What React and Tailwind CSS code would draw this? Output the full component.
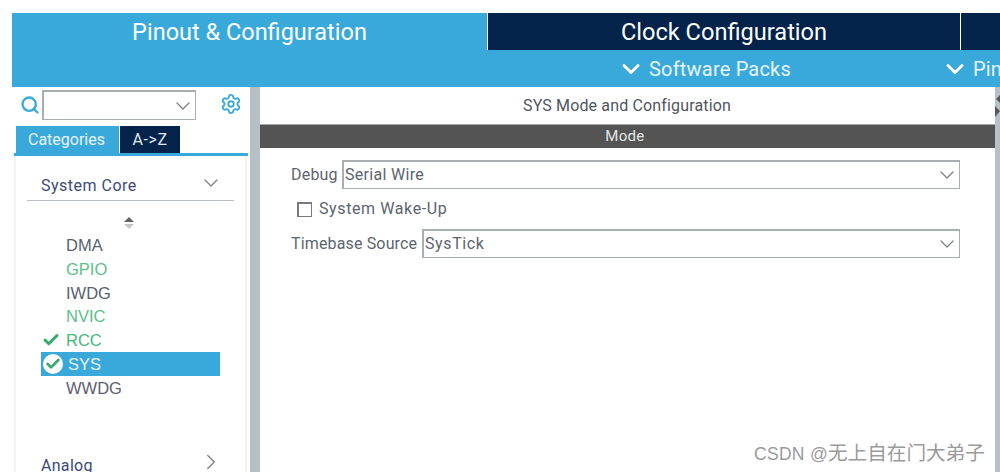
import React from "react";
import { ChevronDown, ChevronRight, Search, Settings, Check } from "lucide-react";

const items = [
  { name: "DMA", color: "text-[#5a5f6e]" },
  { name: "GPIO", color: "text-[#5cc08a]" },
  { name: "IWDG", color: "text-[#5a5f6e]" },
  { name: "NVIC", color: "text-[#5cc08a]" },
  { name: "RCC", color: "text-[#45b878]", check: true },
  { name: "SYS", selected: true },
  { name: "WWDG", color: "text-[#5a5f6e]" },
];

const Select = ({ value, tracking, className }) => (
  <div className={`h-[29px] flex items-center justify-between border-2 border-[#a9aeb3] border-r border-b bg-white pl-[1px] ${className}`}>
    <span className={`text-[16px] text-[#5c6470] ${tracking}`}>{value}</span>
    <ChevronDown size={24} strokeWidth={1.3} className="text-[#7d8085]" />
  </div>
);

const App = () => {
  return (
    <div className="relative w-[1000px] h-[472px] overflow-hidden bg-white font-['Roboto',sans-serif]">
      <div className="h-[13px] bg-white" />

      {/* top tabs */}
      <div className="ml-[12px]">
        <div className="flex h-[37px]">
          <div className="w-[475px] bg-[#39a9dc] text-white text-[23.5px] leading-[38px] text-center">
            Pinout &amp; Configuration
          </div>
          <div className="w-[472px] ml-[1px] bg-[#03234b] text-white text-[23.6px] leading-[38px] text-center">
            Clock Configuration
          </div>
          <div className="flex-1 ml-[1px] bg-[#03234b]" />
        </div>
        <div className="h-[37px] bg-[#39a9dc] flex items-center text-[#e8f5fb] text-[20px] tracking-[0.2px] whitespace-nowrap">
          <div className="ml-[605px] flex items-center gap-[4px]">
            <ChevronDown size={28} strokeWidth={2.5} className="text-white" />
            <span>Software Packs</span>
          </div>
          <div className="ml-[150px] flex items-center gap-[4px]">
            <ChevronDown size={28} strokeWidth={2.5} className="text-white" />
            <span>Pinout</span>
          </div>
        </div>
      </div>

      <div className="flex h-[385px]">
        {/* left panel */}
        <div className="w-[250px] shrink-0 bg-white">
          <div className="h-[39px] flex items-start pl-[20px] pt-[3px]">
            <Search size={20} strokeWidth={2.8} className="text-[#39a9dc] mt-[5px]" />
            <div className="ml-[2px] w-[154px] h-[30px] border-2 border-[#a9aeb3] border-r border-b flex items-center justify-end">
              <ChevronDown size={24} strokeWidth={1.3} className="text-[#7d8085]" />
            </div>
            <Settings size={22} strokeWidth={2} className="ml-[24px] mt-[3px] text-[#39a9dc]" />
          </div>
          <div className="flex h-[27px] ml-[16px]">
            <div className="w-[103px] bg-[#39a9dc] text-[#e8f5fb] text-[16px] leading-[27px] text-center pr-[2px]">
              Categories
            </div>
            <div className="w-[60px] ml-[1px] bg-[#03234b] text-[#dfe6ee] text-[16px] leading-[27px] text-center tracking-[0.6px]">
              A-&gt;Z
            </div>
          </div>
          <div className="h-[3px] ml-[14px] mr-[2px] bg-[#39a9dc]" />
          <div className="ml-[14px] mr-[3px] h-[316px] border-l-2 border-r-2 border-[#f0f1f2] overflow-hidden">
            <div className="mx-[11px] mt-[14px] h-[31px] flex items-start justify-between border-b border-[#b9bec6] pl-[14px] pr-[11px]">
              <span className="text-[16px] tracking-[0.5px] text-[#3c4a78] leading-[32px]">System Core</span>
              <ChevronDown size={24} strokeWidth={1.3} className="text-[#7d8085] mt-[1px]" />
            </div>
            <div className="flex justify-center pr-[4px] mt-[15px] h-[14px]">
              <svg width="12" height="14" viewBox="0 0 12 14">
                <path d="M6 1 L11 6 H1 Z" fill="#5f6368" />
                <path d="M1 8 H11 L6 13 Z" fill="#c4c7ca" />
              </svg>
            </div>
            <div className="mt-[3px] ml-[25px] w-[179px]">
              {items.map((it) =>
                it.selected ? (
                  <div key={it.name} className="h-[23.8px] bg-[#39a9dc] flex items-center pl-[2px]">
                    <span className="w-[20px] h-[20px] rounded-full bg-white flex items-center justify-center">
                      <Check size={16} strokeWidth={4} className="text-[#37a96b]" />
                    </span>
                    <span className="ml-[5px] text-[16.5px] text-[#e8f5fb] font-['Liberation_Sans',sans-serif]">{it.name}</span>
                  </div>
                ) : (
                  <div key={it.name} className="relative h-[23.8px] pl-[25px] leading-[24px]">
                    {it.check && (
                      <Check size={18} strokeWidth={4} className="absolute left-[1px] top-[3px] text-[#37a96b]" />
                    )}
                    <span className={`text-[16.5px] font-['Liberation_Sans',sans-serif] ${it.color}`}>{it.name}</span>
                  </div>
                )
              )}
            </div>
            <div className="mx-[11px] mt-[55px] h-[22px] flex items-center justify-between pl-[14px] pr-[10px]">
              <span className="text-[16px] tracking-[0.3px] text-[#3c4a78]">Analog</span>
              <ChevronRight size={26} strokeWidth={1.3} className="text-[#7d8085] -mt-[8px]" />
            </div>
          </div>
        </div>

        {/* splitter */}
        <div className="w-[10px] shrink-0 bg-[#b5c0c7]" />

        {/* main */}
        <div className="w-[735px] shrink-0">
          <div className="h-[37px] text-center text-[16px] tracking-[0.15px] text-[#4f5560] leading-[37px] pr-[1px]">
            SYS Mode and Configuration
          </div>
          <div className="h-[24px] bg-[#535453] border-t border-[#a8a8a8] text-center text-[#e6e6e6] text-[15px] leading-[22px] tracking-[0.3px] pr-[5px]">
            Mode
          </div>
          <div className="pt-[12px] pr-[35px] pl-[31px]">
            <div className="flex items-center">
              <span className="w-[51px] text-[16px] tracking-[0.2px] text-[#5c6470]">Debug</span>
              <Select value="Serial Wire" tracking="tracking-[0.3px]" className="flex-1" />
            </div>
            <div className="flex items-center h-[40px] pl-[6px]">
              <span className="w-[15px] h-[15px] border-2 border-[#77797c] border-r border-b" />
              <span className="ml-[7px] text-[16px] tracking-[0.6px] text-[#5c6470]">System Wake-Up</span>
            </div>
            <div className="flex items-center">
              <span className="w-[131px] text-[16px] tracking-[0.15px] text-[#5c6470] whitespace-nowrap">Timebase Source</span>
              <Select value="SysTick" tracking="tracking-[0.6px]" className="flex-1" />
            </div>
          </div>
        </div>

        {/* right edge */}
        <div className="flex-1 bg-[#b5c0c7] flex flex-col items-start pt-[8px]">
          <svg width="5" height="24" viewBox="0 0 5 24">
            <path d="M5 0 L1 4 L5 8 Z" fill="#55585a" />
            <path d="M0 11 L5 16 L0 22 Z" fill="#55585a" />
          </svg>
        </div>
      </div>

      {/* CSDN watermark */}
      <div className="absolute left-[754px] top-[439px] text-[17.5px] tracking-[0.3px] text-[#9a9a9a] font-['Liberation_Sans','Noto_Sans_CJK_SC',sans-serif] whitespace-nowrap">
        CSDN @<span className="text-[19.6px] tracking-normal">无上自在门大弟子</span>
      </div>
    </div>
  );
};

export default App;
